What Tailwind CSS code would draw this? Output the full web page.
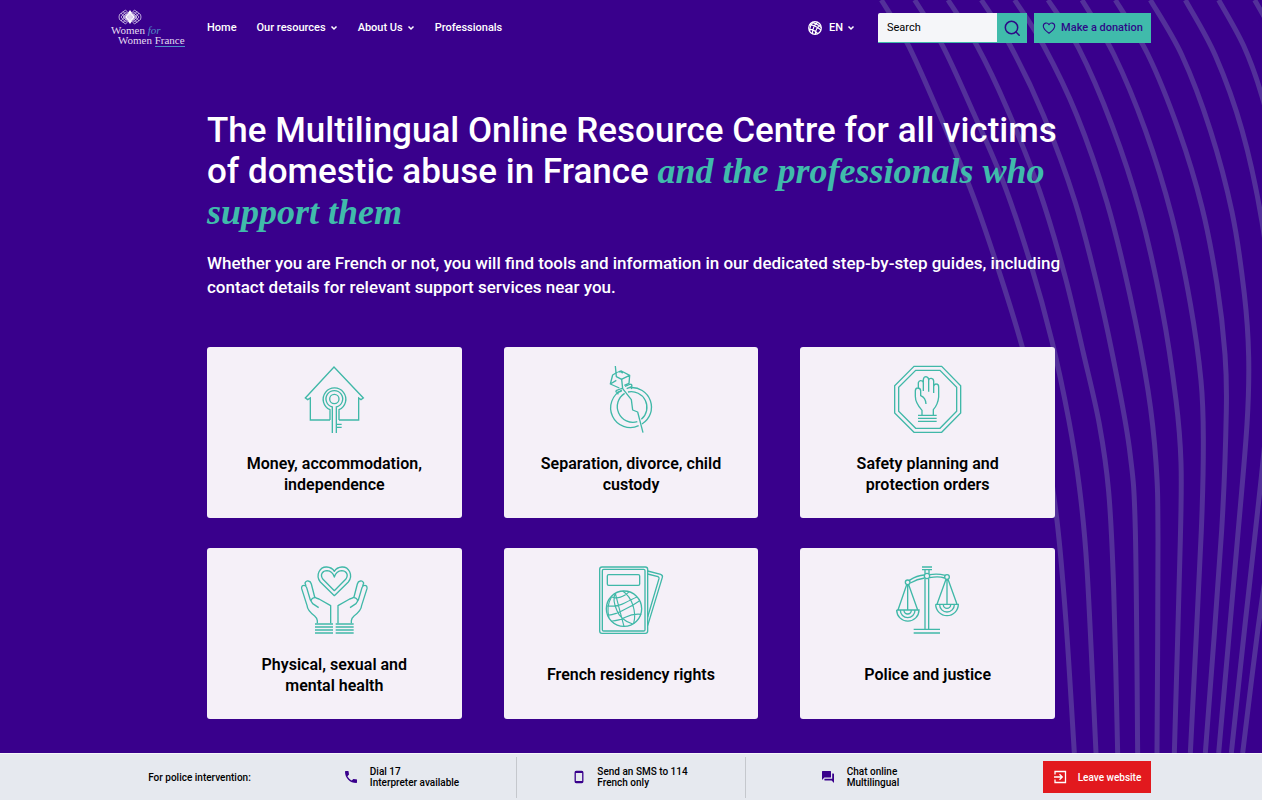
<!DOCTYPE html>
<html lang="en">
<head>
<meta charset="utf-8">
<meta name="viewport" content="width=device-width, initial-scale=1">
<title>Women for Women France</title>
<script src="https://cdn.jsdelivr.net/npm/@tailwindcss/browser@4"></script>
</head>
<body class="min-h-screen flex flex-col bg-[#39008c] text-white font-['Roboto','Liberation_Sans',sans-serif]">
<div class="relative flex-1 overflow-hidden">
  <!-- Decorative curves behind the header and hero -->
  <svg class="absolute top-0 right-0 w-[400px] h-full" viewBox="0 0 1200 1562" preserveAspectRatio="none" fill="none" stroke="#53309a" aria-hidden="true" id="curves"></svg>

  <header class="relative px-4 pt-px">
    <div class="max-w-[1040px] mx-auto h-[54px] flex items-center">
      <a href="#" aria-label="Women for Women France" class="block w-[74px] shrink-0 pb-0.5 font-['Liberation_Serif',serif] text-[11px] leading-[10px] text-[#e4dbf2]">
        <svg class="w-6 h-4 ml-[7px]" viewBox="0 0 24 16" fill="none" stroke="#d9cdec" stroke-width=".8" aria-hidden="true">
          <path d="M12 1 17 8 12 15 7 8Z" fill="#fff" stroke="none"/>
          <path d="M7.500 1 14 8 7.500 15 1.500 10.500 1 8 1.500 5.500ZM16.500 1 10 8 16.500 15 22.500 10.500 23 8 22.500 5.500Z"/>
          <path d="M7.500 3 12 8 7.500 13 3 8ZM16.500 3 12 8 16.500 13 21 8ZM7.500 5.500 10 8 7.500 10.500 5 8ZM16.500 5.500 19 8 16.500 10.500 14 8Z"/>
          <path d="M3 4 9 11M3 12 9 5M5 2.500 11 9M5 13.500 11 7M21 4 15 11M21 12 15 5M19 2.500 13 9M19 13.500 13 7"/>
        </svg>
        <span class="block">Women <i class="text-[#4f8fc6]">for</i></span>
        <span class="block pl-[7px] whitespace-nowrap">Women <span class="border-b border-[#4f8fc6]">France</span></span>
      </a>
      <nav aria-label="Main" class="ml-[22px] flex items-center gap-5 text-[11px] font-medium whitespace-nowrap">
        <a href="#">Home</a>
        <button type="button" class="flex items-center gap-1 font-medium">Our resources
          <svg class="w-2 h-2" viewBox="0 0 8 8" fill="none" stroke="currentColor" stroke-width="1.500" aria-hidden="true"><path d="M1.500 2.500 4 5 6.500 2.500"/></svg></button>
        <button type="button" class="flex items-center gap-1 font-medium">About Us
          <svg class="w-2 h-2" viewBox="0 0 8 8" fill="none" stroke="currentColor" stroke-width="1.500" aria-hidden="true"><path d="M1.500 2.500 4 5 6.500 2.500"/></svg></button>
        <a href="#">Professionals</a>
      </nav>
      <div class="ml-auto flex items-center text-[11px]">
        <button type="button" aria-label="Language: EN" class="flex items-center font-medium">
          <svg class="w-[14px] h-[14px] mr-[7px]" viewBox="0 0 42 42" fill="none" stroke="currentColor" stroke-width="3.500" aria-hidden="true"><circle cx="21" cy="21" r="19"/><path d="M5 11Q20 12 39 27M13 4Q34 12 40 20M3 25Q18 24 29 38M29 4Q15 12 13 39M38 13Q23 19 22 40M15 4Q6 12 5 30"/></svg>
          EN
          <svg class="w-2 h-2 ml-1" viewBox="0 0 8 8" fill="none" stroke="currentColor" stroke-width="1.500" aria-hidden="true"><path d="M1.500 2.500 4 5 6.500 2.500"/></svg>
        </button>
        <form role="search" class="ml-[23px] flex h-[30px]" onsubmit="return false">
          <input type="search" aria-label="Search" placeholder="Search" class="w-[119px] h-full bg-[#f5f6f9] border-b border-[#40bbab] rounded-tl-xs px-[9px] text-[11px] text-black placeholder:text-black outline-none">
          <button type="submit" aria-label="Submit search" class="w-[30px] h-full bg-[#40bbab] flex items-center justify-center text-[#2d0a87]">
            <svg class="w-4 h-4" viewBox="0 0 16 16" fill="none" stroke="currentColor" stroke-width="1.500" stroke-linecap="round" aria-hidden="true"><circle cx="7.500" cy="7.500" r="6.200"/><path d="m12 12 3.200 3.200"/></svg>
          </button>
        </form>
        <a href="#" class="ml-[7px] h-[30px] w-[117px] bg-[#40bbab] text-[#2d0a87] font-medium flex items-center justify-center gap-[5px] whitespace-nowrap">
          <svg class="w-[14px] h-[14px]" viewBox="0 0 14 14" fill="none" stroke="currentColor" stroke-width="1.100" stroke-linejoin="round" aria-hidden="true"><path d="M7 12.300C4 10 1.300 7.800 1.300 5.200 1.300 1.600 5.500 1.100 7 3.700 8.500 1.100 12.700 1.600 12.700 5.200 12.700 7.800 10 10 7 12.300Z"/></svg>
          Make a donation</a>
      </div>
    </div>
  </header>

  <main class="relative max-w-[848px] mx-auto pt-[55px] pb-[34px]">
    <h1 class="-mr-4 text-[35px] leading-[41px] font-medium">The Multilingual Online Resource Centre for all victims of domestic abuse in France <em class="font-['Liberation_Serif',serif] text-[36px] leading-none font-bold text-[#40bbab]">and the professionals who support them</em></h1>
    <p class="-mr-4 mt-[18px] text-[17px] leading-6 font-medium">Whether you are French or not, you will find tools and information in our dedicated step-by-step guides, including contact details for relevant support services near you.</p>

    <div class="mt-12 grid grid-cols-3 gap-x-[42px] gap-y-[30px] text-black text-[16px] leading-[21px] font-semibold text-center">
      <a href="#" class="bg-[#f5f0f8] rounded-[3px] pt-2 pb-4 px-8 flex flex-col items-center">
        <svg class="w-[90px] h-[90px]" viewBox="-3 0 270 270" fill="none" stroke="#40b8a8" stroke-width="4" aria-hidden="true">
          <path d="M120 195H61V129L53 134 46 129 132 36 220 129 213 134 206 129V195H147"/>
          <path d="M127 234V156A25 25 0 1 1 139 156V234M120 195V164A34 34 0 1 1 147 164V195"/><circle cx="133" cy="132" r="14"/><path d="M139 208H155M139 217H155" />
        </svg>
        <span class="h-[57px] flex items-center">Money, accommodation, independence</span>
      </a>
      <a href="#" class="bg-[#f5f0f8] rounded-[3px] pt-2 pb-4 px-8 flex flex-col items-center">
        <svg class="w-[90px] h-[90px]" viewBox="-12 0 270 270" fill="none" stroke="#40b8a8" stroke-width="4" stroke-linejoin="round" aria-hidden="true">
          <path d="M76 33 79 65 95 73 98 101 124 134 128 165 143 171 159 233"/>
          <path d="M83 51 68 60 61 87 88 99M61 87 79 76M85 51 94 48 119 61 117 85 103 91M94 73 119 61M92 49 98 55"/>
          <path d="M78 107 99 99M105 94 122 87M78 107Q77 113 83 112L95 108M110 101 125 95Q127 89 122 87M82 113 85 118M126 97 124 102"/>
          <path d="M96 105A59 59 0 0 0 146 212M118 98A59 59 0 0 1 156 207M104 115A47 47 0 0 0 142 200M114 111A47 47 0 0 1 154 193"/>
        </svg>
        <span class="h-[57px] flex items-center">Separation, divorce, child custody</span>
      </a>
      <a href="#" class="bg-[#f5f0f8] rounded-[3px] pt-2 pb-4 px-8 flex flex-col items-center">
        <svg class="w-[90px] h-[90px]" viewBox="9 0 270 270" fill="none" stroke="#40b8a8" stroke-width="4" aria-hidden="true">
          <path d="M102 34H185L242 92V174L185 232H102L44 174V92ZM107 46H180L230 97V169L180 220H107L56 169V97Z"/>
          <path d="M126 180V166Q106 144 106 124V107Q107 99 113 99 121 99 122 107V122Q137 128 138 147M115 98V83Q117 76 123 77 130 77 130 84V108M130 82V74Q131 65 138 65 145 66 146 74V110M146 77Q147 69 154 70 161 71 161 79V114M161 94Q163 86 169 87 176 87 176 96V126Q174 148 160 164V180"/>
          <path d="M114 181H170M114 190H170M114 199H170"/>
        </svg>
        <span class="h-[57px] flex items-center">Safety planning and protection orders</span>
      </a>
      <a href="#" class="bg-[#f5f0f8] rounded-[3px] pt-2 pb-4 px-8 flex flex-col items-center">
        <svg class="w-[90px] h-[90px]" viewBox="-2 3 270 270" fill="none" stroke="#40b8a8" stroke-width="4" stroke-linejoin="round" aria-hidden="true">
          <path d="M134 122 92 81C76 60 91 35 111 36Q127 37 134 49 141 37 157 36C177 35 192 60 176 81ZM134 107 100 73C89 58 100 47 112 47 124 48 131 56 134 66 137 56 144 48 156 47 168 47 179 58 168 73Z"/>
          <g id="hand"><path d="M83 205V197Q82 189 75 183 53 167 52 151L36 101Q35 91 43 91 49 91 51 98L62 135 69 146 87 158M49 93 46 84Q49 76 56 78 63 79 65 87L75 126Q79 130 88 132L123 152V205M64 138Q66 128 76 128"/><path d="M76 207H130M76 216H130M76 225H130M76 234H130"/></g>
          <use href="#hand" transform="matrix(-1 0 0 1 268 0)"/>
        </svg>
        <span class="h-[57px] flex items-center">Physical, sexual and<br>mental health</span>
      </a>
      <a href="#" class="bg-[#f5f0f8] rounded-[3px] pt-2 pb-4 px-8 flex flex-col items-center">
        <svg class="w-[90px] h-[90px]" viewBox="-12 3 270 270" fill="none" stroke="#40b8a8" stroke-width="4" aria-hidden="true">
          <rect x="29" y="36" width="144" height="199" rx="7"/><rect x="37" y="43" width="128" height="185" rx="4"/><rect x="52" y="59" width="97" height="32" rx="4"/>
          <path d="M173 48 212 58Q219 61 217 67L173 212M173 57 204 65Q208 67 207 71L173 186"/>
          <circle cx="102" cy="161" r="53"/>
          <path d="M76 115Q66 135 81 167 92 195 128 207M98 108Q119 122 129 151 138 181 131 205M76 115Q88 162 102 214M57 188Q48 155 64 127M65 126Q83 132 98 124 114 116 116 110M52 181Q80 177 102 164 128 152 149 137M64 198Q85 199 106 187 129 175 154 178M50 153Q82 156 104 144 127 132 141 126" stroke-width="3.500"/>
        </svg>
        <span class="h-[57px] flex items-center">French residency rights</span>
      </a>
      <a href="#" class="bg-[#f5f0f8] rounded-[3px] pt-2 pb-4 px-8 flex flex-col items-center">
        <svg class="w-[90px] h-[90px]" viewBox="10 3 270 270" fill="none" stroke="#40b8a8" stroke-width="4" aria-hidden="true">
          <path d="M127 36H157M127 44H157M136 45V56M148 45V56M136 71V223M147 71V223M102 223H181M102 234H181"/>
          <circle cx="142" cy="63" r="8"/><circle cx="84" cy="82" r="7"/><circle cx="202" cy="66" r="7"/>
          <path d="M89 76Q112 61 134 60M92 84Q112 72 135 69M150 59Q174 55 197 61M150 68Q176 63 195 69"/>
          <path d="M81 89 55 165M84 89V165M87 89 114 165M51 165H118A33 33 0 0 1 51 165M62 166A22 22 0 0 0 106 166M73 166A11 11 0 0 0 95 166"/>
          <path d="M199 73 172 148M202 73V148M205 73 232 148M168 148H236A33 33 0 0 1 168 148M180 149A22 22 0 0 0 224 149M191 149A11 11 0 0 0 213 149"/>
        </svg>
        <span class="h-[57px] flex items-center">Police and justice</span>
      </a>
    </div>
  </main>
</div>

<footer class="relative bg-[#e6e9ef] border-t border-[#f7f7fb] text-black px-4">
  <div class="max-w-[1040px] mx-auto h-[46px] grid grid-cols-[177fr_229fr_229fr_229fr_176fr] items-center text-[10px] leading-[11px] font-medium whitespace-nowrap">
    <p class="text-center">For police intervention:</p>
    <a href="#" class="h-[41px] flex items-center justify-center gap-[13px] border-r border-[#c5c8cd]">
      <svg class="w-3 h-3" viewBox="3 3 18 18" fill="#39008c" aria-hidden="true"><path d="M20 15.500c-1.200 0-2.500-.2-3.600-.6-.3-.1-.7 0-1 .2l-2.200 2.200c-2.800-1.400-5.100-3.800-6.600-6.600l2.200-2.200c.3-.3.400-.7.200-1C8.700 6.400 8.500 5.200 8.500 4c0-.6-.4-1-1-1H4c-.6 0-1 .4-1 1 0 9.400 7.600 17 17 17 .6 0 1-.4 1-1v-3.500c0-.6-.4-1-1-1z"/></svg>
      <span>Dial 17<br>Interpreter available</span></a>
    <a href="#" class="h-[41px] flex items-center justify-center gap-[13px] border-r border-[#c5c8cd]">
      <svg class="w-[10px] h-[14px]" viewBox="1 0 10 14" fill="none" stroke="#39008c" aria-hidden="true"><rect x="2.200" y="1.500" width="7.600" height="11" rx="1" stroke-width="1.300"/><path d="M2 2.200H10M2 11.800H10" stroke-width="1.600"/></svg>
      <span>Send an SMS to 114<br>French only</span></a>
    <a href="#" class="h-[41px] flex items-center justify-center gap-[13px]">
      <svg class="w-3 h-3" viewBox="2 2 20 20" fill="#39008c" aria-hidden="true"><path d="M21 6h-2v9H6v2c0 .6.400 1 1 1h11l4 4V7c0-.6-.4-1-1-1zm-4 6V3c0-.6-.4-1-1-1H3c-.6 0-1 .4-1 1v14l4-4h10c.6 0 1-.4 1-1z"/></svg>
      <span>Chat online<br>Multilingual</span></a>
    <button type="button" class="justify-self-end h-8 w-[108px] bg-[#e2191e] text-white font-medium flex items-center justify-center gap-[11px]">
      <svg class="w-[14px] h-[14px]" viewBox="0 0 14 14" fill="none" stroke="currentColor" stroke-width="1.300" aria-hidden="true"><path d="M2 4.500V1.500H12.500V12.500H2V9.500M1 7H9M6.500 4.200 9.300 7 6.500 9.800"/></svg>
      Leave website</button>
  </div>
</footer>

<script>
// Each curve is a list of x,y points joined by a Catmull-Rom spline.
const curves = [
  [58,0,140,95,240,250,330,400,405,550,480,718,545,900,585,1080,612,1290,637,1562],
  [158,0,242,95,335,235,425,380,505,545,570,708,620,870,652,1010,675,1180,702,1562],
  [258,0,345,95,435,225,532,395,608,570,665,735,712,880,740,1020,755,1220,767,1562],
  [358,0,445,95,545,240,640,420,712,610,767,790,804,940,820,1100,827,1562],
  [458,0,545,95,645,240,735,420,803,610,858,810,882,960,888,1120,885,1562],
  [558,0,650,100,750,260,835,440,900,640,942,830,957,960,955,1120,937,1562],
  [660,0,755,112,850,270,930,450,985,630,1017,790,1024,910,1018,1100,985,1562],
  [760,0,857,112,950,270,1020,430,1065,590,1089,735,1093,850,1079,1100,1030,1562],
  [865,0,960,115,1045,270,1110,440,1147,610,1160,740,1155,880,1125,1130,1070,1562],
  [970,0,1060,115,1140,270,1200,460,1225,620,1224,790,1198,990,1150,1290,1108,1562],
  [1070,0,1145,95,1200,200,1265,380,1290,600,1270,850,1225,1120,1185,1320,1142,1562],
  [1178,0,1215,45]
];
const svg = document.getElementById('curves');
for (const c of curves) {
  const p = [];
  for (let i = 0; i < c.length; i += 2) p.push([c[i], c[i + 1]]);
  let d = 'M' + p[0];
  for (let i = 0; i < p.length - 1; i++) {
    const a = p[i - 1] || p[i], b = p[i], e = p[i + 1], f = p[i + 2] || e;
    d += 'C' + [b[0] + (e[0] - a[0]) / 6, b[1] + (e[1] - a[1]) / 6, e[0] - (f[0] - b[0]) / 6, e[1] - (f[1] - b[1]) / 6, e[0], e[1]];
  }
  const path = document.createElementNS('http://www.w3.org/2000/svg', 'path');
  path.setAttribute('d', d);
  path.setAttribute('stroke-width', '5');
  path.setAttribute('vector-effect', 'non-scaling-stroke');
  svg.append(path);
}
</script>
</body>
</html>
